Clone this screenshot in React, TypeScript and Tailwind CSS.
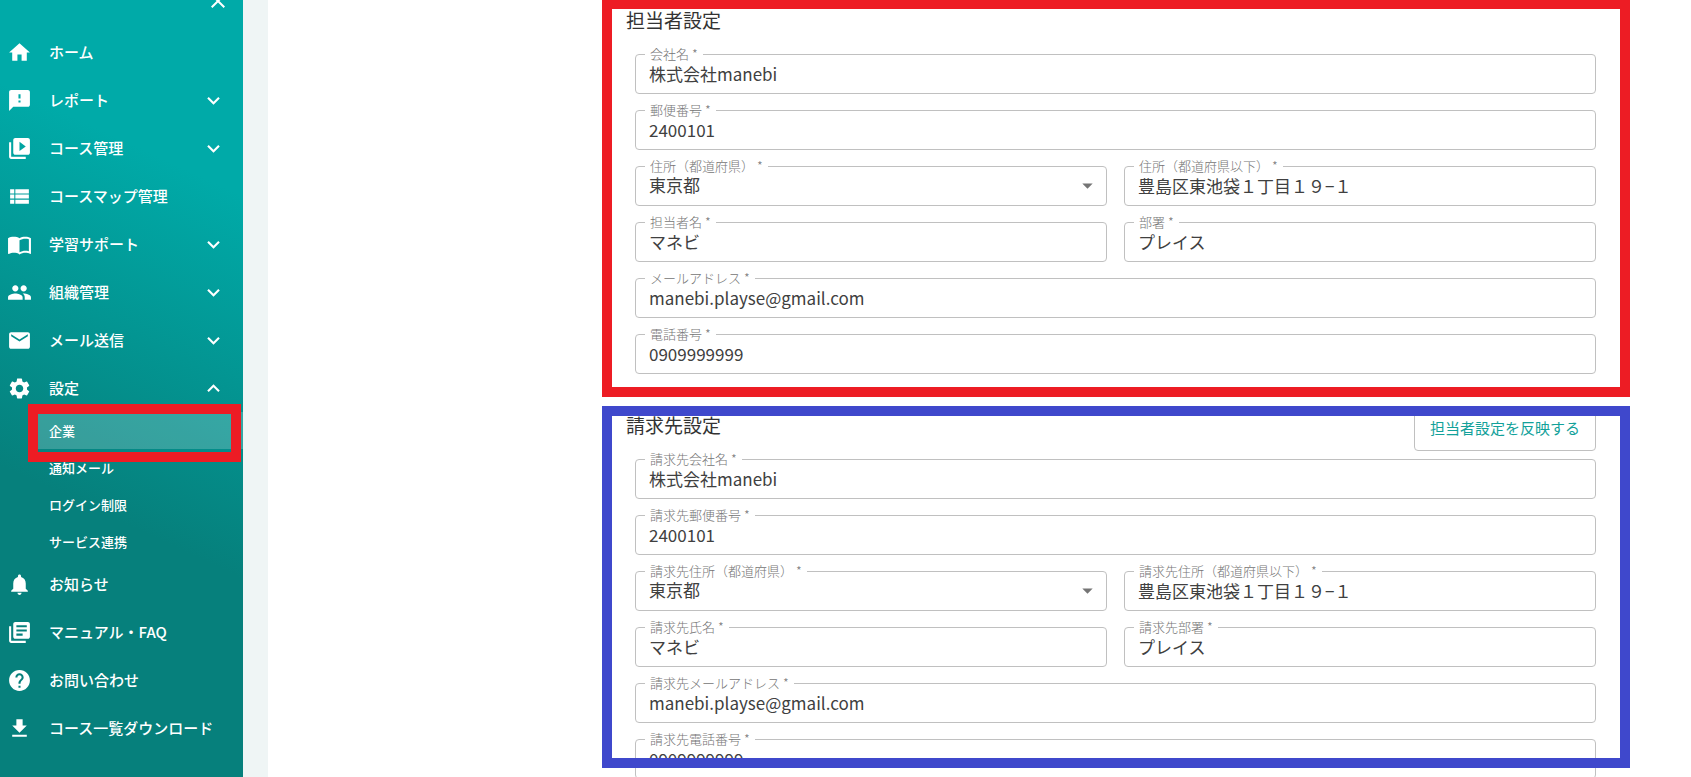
import { useId, type ReactNode } from "react";
import type { IconType } from "react-icons";
import {
  MdArrowDropDown,
  MdClose,
  MdExpandLess,
  MdExpandMore,
  MdFileDownload,
  MdHelp,
  MdHome,
  MdLibraryBooks,
  MdMail,
  MdNotifications,
  MdPeople,
  MdSettings,
  MdSmsFailed,
  MdVideoLibrary,
  MdViewList,
} from "react-icons/md";

function BookIcon({ className }: { className?: string }) {
  return (
    <svg viewBox="0 0 24 24" fill="currentColor" className={className} aria-hidden="true">
      <path d="M21 5c-1.11-.35-2.33-.5-3.500-.5-1.950 0-4.050.4-5.500 1.500-1.450-1.100-3.550-1.500-5.500-1.500S2.450 4.900 1 6v14.650c0 .25.25.5.5.5.1 0 .15-.05.25-.05C3.100 20.450 5.050 20 6.500 20c1.950 0 4.050.4 5.500 1.500 1.350-.85 3.800-1.500 5.500-1.500 1.650 0 3.350.3 4.750 1.050.1.05.15.05.25.05.25 0 .5-.25.5-.5V6c-.6-.45-1.250-.75-2-1zm0 13.500c-1.100-.35-2.300-.5-3.500-.5-1.700 0-4.150.65-5.500 1.500V8c1.350-.85 3.800-1.500 5.500-1.500 1.200 0 2.400.15 3.500.5v11.500z" />
    </svg>
  );
}

type Item = {
  label: string;
  icon: IconType | typeof BookIcon;
  state?: "closed" | "open";
};

const mainItems: Item[] = [
  { label: "ホーム", icon: MdHome },
  { label: "レポート", icon: MdSmsFailed, state: "closed" },
  { label: "コース管理", icon: MdVideoLibrary, state: "closed" },
  { label: "コースマップ管理", icon: MdViewList },
  { label: "学習サポート", icon: BookIcon, state: "closed" },
  { label: "組織管理", icon: MdPeople, state: "closed" },
  { label: "メール送信", icon: MdMail, state: "closed" },
  { label: "設定", icon: MdSettings, state: "open" },
];

const footerItems: Item[] = [
  { label: "お知らせ", icon: MdNotifications },
  { label: "マニュアル・FAQ", icon: MdLibraryBooks },
  { label: "お問い合わせ", icon: MdHelp },
  { label: "コース一覧ダウンロード", icon: MdFileDownload },
];

const subItems = ["企業", "通知メール", "ログイン制限", "サービス連携"];

function NavRow({ label, icon: Icon, state }: Item) {
  const inner = (
    <>
      <Icon className="size-[25px] shrink-0" />
      <span className="ml-[17px] flex-1 whitespace-nowrap text-left">{label}</span>
      {state === "closed" && <MdExpandMore className="size-[25px] shrink-0" />}
      {state === "open" && <MdExpandLess className="size-[25px] shrink-0" />}
    </>
  );
  const style = "flex h-12 w-full items-center pl-[7px] pr-[17px] text-[15px] font-medium";
  return (
    <li>
      {state ? (
        <button type="button" aria-expanded={state === "open"} className={style}>
          {inner}
        </button>
      ) : (
        <a href="#" className={style}>
          {inner}
        </a>
      )}
    </li>
  );
}

function Sidebar() {
  return (
    <aside className="w-[243px] shrink-0 overflow-hidden bg-linear-[205deg,#00aaa8_22%,#06807c_65%] text-white">
      <div className="-mt-[11px] mb-[15px] flex h-6 justify-end pr-[13px]">
        <button type="button" aria-label="閉じる">
          <MdClose className="size-6" />
        </button>
      </div>
      <nav>
        <ul>
          {mainItems.map((item) => (
            <NavRow key={item.label} {...item} />
          ))}
          <li>
            <ul>
              {subItems.map((label, i) => (
                <li key={label} className="relative pl-8">
                  <a
                    href="#"
                    className={
                      i === 0
                        ? "flex h-[37px] items-center bg-white/20 pl-[17px] text-[13px] font-medium"
                        : "flex h-[37px] items-center pl-[17px] text-[13px] font-medium"
                    }
                  >
                    {label}
                  </a>
                  {i === 0 && (
                    <div className="pointer-events-none absolute -top-2 right-0.5 -bottom-[13px] left-7 z-10 border-10 border-[#ed1c24]" />
                  )}
                </li>
              ))}
            </ul>
          </li>
          {footerItems.map((item) => (
            <NavRow key={item.label} {...item} />
          ))}
        </ul>
      </nav>
    </aside>
  );
}

function Outlined({ id, label, children }: { id: string; label: string; children: ReactNode }) {
  return (
    <div className="relative h-10 min-w-0 rounded border border-[#c0c0c0]">
      <label
        htmlFor={id}
        className="absolute -top-[11px] left-[9px] bg-white px-[5px] text-[13px] leading-5 font-light whitespace-pre text-[#757575]"
      >
        {label} *
      </label>
      {children}
    </div>
  );
}

const control =
  "block h-full w-full appearance-none bg-transparent px-[13px] pb-0.5 text-[17px] leading-6 text-[#404040] outline-none";

function TextField({ label, value }: { label: string; value: string }) {
  const id = useId();
  return (
    <Outlined id={id} label={label}>
      <input id={id} defaultValue={value} className={control} />
    </Outlined>
  );
}

function SelectField({ label, value }: { label: string; value: string }) {
  const id = useId();
  return (
    <Outlined id={id} label={label}>
      <select id={id} defaultValue={value} className={control}>
        <option>{value}</option>
      </select>
      <MdArrowDropDown className="pointer-events-none absolute top-1.5 right-1.5 size-[25px] text-[#757575]" />
    </Outlined>
  );
}

function Fields({ prefix, person }: { prefix: string; person: string }) {
  return (
    <div className="flex flex-col gap-4 pl-[9px]">
      <TextField label={`${prefix}会社名`} value="株式会社manebi" />
      <TextField label={`${prefix}郵便番号`} value="2400101" />
      <div className="grid grid-cols-2 gap-[17px]">
        <SelectField label={`${prefix}住所（都道府県）`} value="東京都" />
        <TextField label={`${prefix}住所（都道府県以下）`} value="豊島区東池袋１丁目１９−１" />
      </div>
      <div className="grid grid-cols-2 gap-[17px]">
        <TextField label={`${prefix}${person}`} value="マネビ" />
        <TextField label={`${prefix}部署`} value="プレイス" />
      </div>
      <TextField label={`${prefix}メールアドレス`} value="manebi.playse@gmail.com" />
      <TextField label={`${prefix}電話番号`} value="0909999999" />
    </div>
  );
}

export default function App() {
  return (
    <div className="flex h-screen overflow-hidden bg-white font-['Noto_Sans_CJK_JP',sans-serif] text-[#333]">
      <Sidebar />
      <div className="w-[25px] shrink-0 bg-[#eff5f5]" />
      <main className="min-w-0 flex-1 pr-[61px] pl-[334px]">
        <section className="-mt-px border-10 border-[#ed1c24] pr-6 pb-[13px] pl-3.5">
          <h2 className="h-[45px] text-[19px] leading-[22px]">担当者設定</h2>
          <Fields prefix="" person="担当者名" />
        </section>
        <section className="relative mt-[9px] pt-2.5 pr-[34px] pl-6">
          <div className="pointer-events-none absolute inset-x-0 top-0 z-10 h-[362px] border-10 border-[#3f48cc]" />
          <div className="flex h-[43px] items-start justify-between">
            <h2 className="-mt-0.5 text-[19px] leading-[22px]">請求先設定</h2>
            <button
              type="button"
              className="-mt-2.5 flex h-[45px] items-center rounded border border-[#c0c0c0] px-[15px] text-[15px] text-[#12a19a]"
            >
              担当者設定を反映する
            </button>
          </div>
          <Fields prefix="請求先" person="氏名" />
        </section>
      </main>
    </div>
  );
}
